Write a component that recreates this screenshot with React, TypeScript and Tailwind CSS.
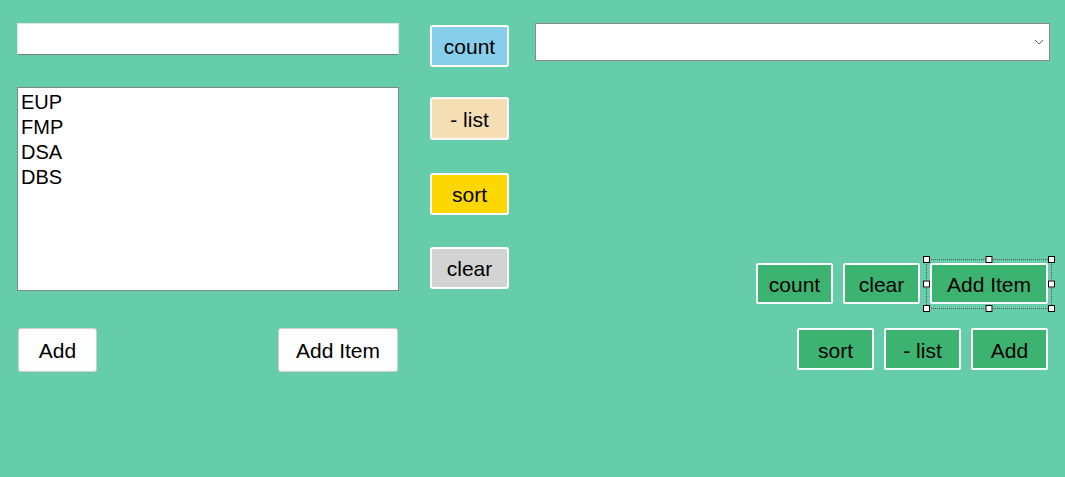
import React from "react";

const greenBtn =
  "h-[41px] w-[77px] pt-[2px] bg-[#3CB371] border-2 border-white rounded-[2px] text-[21px] text-black leading-none";

const Handle = ({ className }: { className: string }) => (
  <span
    className={`absolute w-[7px] h-[7px] bg-white border border-black ${className}`}
  />
);

const App: React.FC = () => {
  const items = ["EUP", "FMP", "DSA", "DBS"];

  return (
    <div className="w-full h-[477px] bg-[#66CDAA] flex pt-[23px] pl-[17px] font-['Liberation_Sans',Arial,sans-serif] text-black">
      {/* left column */}
      <div className="w-[382px] flex flex-col">
        <input
          type="text"
          className="h-[32px] w-full bg-white border border-[#e3e3e3] border-b-[#7a7a7a] outline-none"
        />
        <div className="mt-[32px] h-[204px] w-full bg-white border border-[#828790] pl-[3px] pt-[2px]">
          {items.map((item) => (
            <div key={item} className="text-[20px] leading-[25px]">
              {item}
            </div>
          ))}
        </div>
        <div className="mt-[37px] flex justify-between px-[1px]">
          <button className="h-[44px] w-[79px] pt-[2px] bg-[#fdfdfd] border border-[#d0d0d0] rounded-[3px] text-[21px]">
            Add
          </button>
          <button className="h-[44px] w-[120px] pt-[2px] bg-[#fdfdfd] border border-[#d0d0d0] rounded-[3px] text-[21px]">
            Add Item
          </button>
        </div>
      </div>

      {/* middle column */}
      <div className="ml-[31px] w-[79px] flex flex-col">
        <button className="mt-[2px] h-[42px] w-full pt-[2px] bg-[#87CEEB] border-2 border-white rounded-[3px] text-[21px]">
          count
        </button>
        <button className="mt-[30px] h-[43px] w-full pt-[2px] bg-[#F5DEB3] border-2 border-white rounded-[3px] text-[21px]">
          - list
        </button>
        <button className="mt-[33px] h-[42px] w-full pt-[2px] bg-[#FFD700] border-2 border-white rounded-[3px] text-[21px]">
          sort
        </button>
        <button className="mt-[32px] h-[42px] w-full pt-[2px] bg-[#D3D3D3] border-2 border-white rounded-[3px] text-[21px]">
          clear
        </button>
      </div>

      {/* right column */}
      <div className="ml-[26px] w-[515px] flex flex-col">
        <div className="relative h-[38px] w-full bg-white border border-[#8a8a8a]">
          <svg
            className="absolute right-[5px] top-[15px]"
            width="10"
            height="6"
            viewBox="0 0 10 6"
            fill="none"
            stroke="#606060"
            strokeWidth="1"
          >
            <path d="M1 1l4 4 4-4" />
          </svg>
        </div>

        <div className="mt-[202px] pr-[2px] flex flex-col items-end">
          <div className="flex gap-[10px]">
            <button className={greenBtn}>count</button>
            <button className={greenBtn}>clear</button>
            <div className="relative">
              <button className={`${greenBtn} w-[118px]`}>Add Item</button>
              <div className="absolute -left-[4px] -right-[4px] -top-[4px] -bottom-[5px] border border-dotted border-[#555]" />
              <Handle className="-left-[7px] -top-[7px]" />
              <Handle className="left-1/2 -translate-x-1/2 -top-[7px]" />
              <Handle className="-right-[7px] -top-[7px]" />
              <Handle className="-left-[7px] top-1/2 -translate-y-1/2" />
              <Handle className="-right-[7px] top-1/2 -translate-y-1/2" />
              <Handle className="-left-[7px] -bottom-[8px]" />
              <Handle className="left-1/2 -translate-x-1/2 -bottom-[8px]" />
              <Handle className="-right-[7px] -bottom-[8px]" />
            </div>
          </div>
          <div className="mt-[24px] flex gap-[10px]">
            <button className={`${greenBtn} h-[42px]`}>sort</button>
            <button className={`${greenBtn} h-[42px]`}>- list</button>
            <button className={`${greenBtn} h-[42px]`}>Add</button>
          </div>
        </div>
      </div>
    </div>
  );
};

export default App;
